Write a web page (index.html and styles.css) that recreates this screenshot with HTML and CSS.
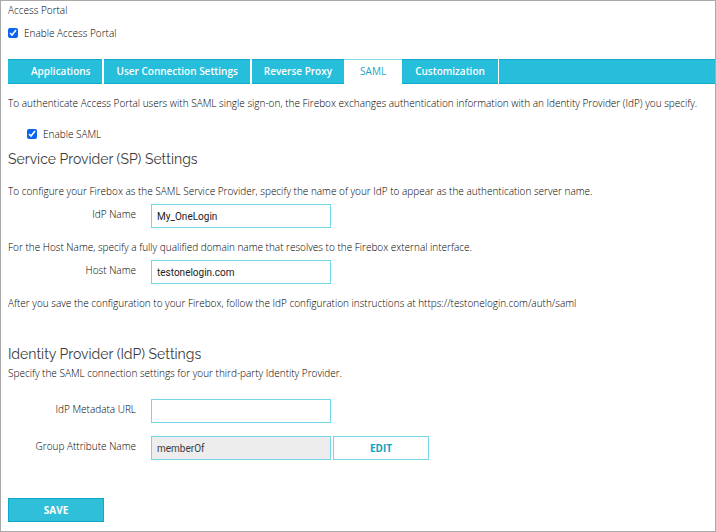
FILE: index.html
```html
<!DOCTYPE html>
<html lang="en">
<head>
<meta charset="utf-8">
<meta name="viewport" content="width=device-width, initial-scale=1">
<title>Access Portal</title>
<link rel="stylesheet" href="styles.css">
</head>
<body>
<main class="page">
  <p class="title">Access Portal</p>
  <label class="check"><input type="checkbox" checked>Enable Access Portal</label>

  <nav class="tabs">
    <a class="tab" href="#applications">Applications</a>
    <a class="tab" href="#connection">User Connection Settings</a>
    <a class="tab" href="#proxy">Reverse Proxy</a>
    <a class="tab tab-active" href="#saml" aria-current="page">SAML</a>
    <a class="tab" href="#customization">Customization</a>
    <span class="tab-fill"></span>
  </nav>

  <form class="form">
    <p>To authenticate Access Portal users with SAML single sign-on, the Firebox exchanges authentication information with an Identity Provider (IdP) you specify.</p>
    <label class="check check-nested"><input type="checkbox" checked>Enable SAML</label>

    <section class="section">
      <h2>Service Provider (SP) Settings</h2>
      <p class="intro">To configure your Firebox as the SAML Service Provider, specify the name of your IdP to appear as the authentication server name.</p>
      <div class="field">
        <label for="idp-name">IdP Name</label>
        <input id="idp-name" type="text" value="My_OneLogin">
      </div>
      <p class="note">For the Host Name, specify a fully qualified domain name that resolves to the Firebox external interface.</p>
      <div class="field">
        <label for="host-name">Host Name</label>
        <input id="host-name" type="text" value="testonelogin.com">
      </div>
      <p class="note">After you save the configuration to your Firebox, follow the IdP configuration instructions at https://testonelogin.com/auth/saml</p>
    </section>

    <section class="section section-idp">
      <h2>Identity Provider (IdP) Settings</h2>
      <p>Specify the SAML connection settings for your third-party Identity Provider.</p>
      <div class="fields">
        <div class="field">
          <label for="metadata-url">IdP Metadata URL</label>
          <input id="metadata-url" type="text">
        </div>
        <div class="field">
          <label for="group-attribute">Group Attribute Name</label>
          <input id="group-attribute" type="text" value="memberOf" readonly>
          <button class="button" type="button">EDIT</button>
        </div>
      </div>
    </section>

    <button class="button button-primary" type="submit">SAVE</button>
  </form>
</main>
</body>
</html>
```
FILE: styles.css
```css
* {
  box-sizing: border-box;
}

body {
  margin: 0;
  background: #fff;
  color: #000;
  font: 300 10px/16px "Open Sans", "Noto Sans", sans-serif;
}

p,
h2 {
  margin: 0;
}

.page {
  min-height: 100vh;
  padding: 1px 0 8px 7px;
  border: 1px solid #a9a9a9;
}

.check {
  display: flex;
  align-items: center;
  gap: 6px;
  margin-top: 7px;
}

.check input {
  width: 10px;
  height: 10px;
  margin: 0;
  accent-color: #0a64f0;
}

.check-nested {
  margin: 15px 0 0 19px;
}

.tabs {
  display: flex;
  margin-top: 18px;
  line-height: 23px;
}

.tab,
.tab-fill {
  border: 1px solid #0fa9cd;
  border-width: 1px 0;
  background: #26bedb;
}

.tab {
  padding: 0 12px;
  margin-right: 2px;
  color: #fff;
  font-weight: 600;
  text-decoration: none;
  white-space: nowrap;
}

.tab:first-child {
  padding-left: 23px;
}

.tab:nth-child(3),
.tab-active {
  margin-right: 0;
}

.tab:nth-child(5) {
  padding: 0 13px;
  margin-right: 1px;
}

.tab-active {
  padding: 0 16px;
  border-color: #7fdaea #fff #fff;
  background: #fff;
  color: #18a5c8;
  font-weight: 400;
}

.tab-fill {
  flex: 1;
}

.form {
  padding-top: 11px;
}

.section {
  margin-top: 7px;
}

.section-idp {
  margin-top: 33px;
}

h2 {
  color: #3c3c3c;
  font: 400 14px/20px Raleway, "Open Sans", sans-serif;
}

.intro {
  margin: 14px 0 5px;
}

.note {
  margin: 11px 0 5px;
}

.field {
  display: grid;
  grid-template-columns: 128px 180px 96px;
  column-gap: 2px;
}

.field label {
  padding-top: 2px;
  text-align: right;
}

.field input {
  width: 180px;
  height: 24px;
  margin-left: 13px;
  padding: 0 5px;
  border: 1px solid #72d6e7;
  border-radius: 0;
  background: #fff;
  color: #222;
  font: 10px/16px Roboto, "Liberation Sans", sans-serif;
}

.field input:read-only {
  background: #ededed;
  color: #3c3c3c;
}

.field .button {
  margin-left: 13px;
}

.section-idp h2 {
  margin-bottom: 1px;
}

.fields {
  display: grid;
  gap: 13px;
  margin-top: 18px;
}

.button {
  width: 96px;
  height: 24px;
  padding: 0;
  border: 1px solid #72d6e7;
  border-radius: 0;
  background: #fff;
  color: #0b9fc4;
  font: 700 10px/16px "Open Sans", "Noto Sans", sans-serif;
}

.button-primary {
  display: block;
  margin-top: 38px;
  border-color: #0fa9cd;
  background: #30bfd9;
  color: #fff;
}
```
